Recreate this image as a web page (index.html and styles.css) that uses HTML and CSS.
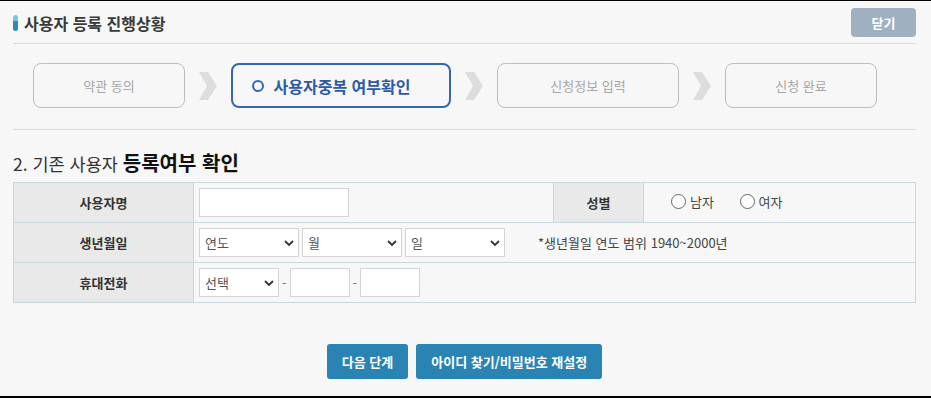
FILE: index.html
```html
<!DOCTYPE html>
<html lang="ko">
<head>
    <meta charset="UTF-8">
    <meta name="viewport" content="width=device-width, initial-scale=1.0">
    <title>사용자 등록 진행상황</title>
    <link rel="stylesheet" href="styles.css">
</head>
<body>
    <div class="container">
        <div class="top-bar">
            <h1 class="page-title"><span class="title-mark"></span>사용자 등록 진행상황</h1>
            <button class="btn-close" type="button">닫기</button>
        </div>

        <div class="steps">
            <div class="step step-1">약관 동의</div>
            <svg class="step-arrow" width="18" height="28" viewBox="0 0 18 28"><polygon points="0,0 9,0 18,14 9,28 0,28 8,14" fill="#dddddd"/></svg>
            <div class="step step-2 active"><span class="step-dot"></span>사용자중복 여부확인</div>
            <svg class="step-arrow" width="18" height="28" viewBox="0 0 18 28"><polygon points="0,0 9,0 18,14 9,28 0,28 8,14" fill="#dddddd"/></svg>
            <div class="step step-3">신청정보 입력</div>
            <svg class="step-arrow" width="18" height="28" viewBox="0 0 18 28"><polygon points="0,0 9,0 18,14 9,28 0,28 8,14" fill="#dddddd"/></svg>
            <div class="step step-4">신청 완료</div>
        </div>

        <h2 class="section-title">2. 기존 사용자 <strong>등록여부 확인</strong></h2>

        <form id="checkForm">
            <table class="form-table">
                <tr>
                    <th class="col-label">사용자명</th>
                    <td class="col-name"><input type="text" class="inp inp-name"></td>
                    <th class="col-label2">성별</th>
                    <td>
                        <label class="radio"><input type="radio" name="gender" value="m"><span class="radio-mark"></span>남자</label>
                        <label class="radio"><input type="radio" name="gender" value="f"><span class="radio-mark"></span>여자</label>
                    </td>
                </tr>
                <tr>
                    <th>생년월일</th>
                    <td colspan="3">
                        <div class="field-row">
                            <select class="sel sel-date"><option>연도</option></select>
                            <select class="sel sel-date"><option>월</option></select>
                            <select class="sel sel-date"><option>일</option></select>
                            <span class="hint">*생년월일 연도 범위 1940~2000년</span>
                        </div>
                    </td>
                </tr>
                <tr>
                    <th>휴대전화</th>
                    <td colspan="3">
                        <div class="field-row">
                            <select class="sel sel-phone"><option>선택</option></select>
                            <span class="dash">-</span>
                            <input type="text" class="inp inp-phone">
                            <span class="dash">-</span>
                            <input type="text" class="inp inp-phone">
                        </div>
                    </td>
                </tr>
            </table>

            <div class="actions">
                <button type="submit" class="btn-main">다음 단계</button>
                <button type="button" class="btn-main">아이디 찾기/비밀번호 재설정</button>
            </div>
        </form>
    </div>
</body>
</html>
```

FILE: styles.css
```css
html, body {
    height: 100%;
}

body {
    margin: 0;
    font-family: "Noto Sans CJK KR", "Noto Sans", sans-serif;
    background-color: #f7f7f7;
    color: #333;
    box-sizing: border-box;
    border-top: 1px solid #000;
    border-bottom: 2px solid #000;
}

.container {
    padding: 0 15px 0 13px;
}

.top-bar {
    display: flex;
    justify-content: space-between;
    align-items: center;
    padding: 7px 0 6px;
    border-bottom: 1px solid #dcdcdc;
}

.page-title {
    display: flex;
    align-items: center;
    margin: 0;
    font-size: 16px;
    font-weight: 700;
    color: #3a3a3a;
}

.title-mark {
    display: inline-block;
    width: 5px;
    height: 16px;
    margin-right: 6px;
    border-radius: 3px;
    background: linear-gradient(#7fc3d6 0%, #7fc3d6 35%, #2b8bb0 36%, #2b8bb0 100%);
}

.btn-close {
    width: 65px;
    height: 29px;
    border: none;
    border-radius: 4px;
    background-color: #9fb1c0;
    color: #fff;
    font-family: inherit;
    font-size: 13px;
    font-weight: 700;
}

.steps {
    display: flex;
    align-items: center;
    gap: 14px;
    padding: 19px 0 21px 20px;
    border-bottom: 1px solid #dcdcdc;
}

.step {
    box-sizing: border-box;
    display: flex;
    align-items: center;
    justify-content: center;
    height: 45px;
    border: 1px solid #bdbdbd;
    border-radius: 8px;
    background: #f7f7f7;
    color: #a6a6a6;
    font-size: 13px;
}

.step-1 { width: 152px; }
.step-2 { width: 220px; }
.step-3 { width: 182px; }
.step-4 { width: 152px; }

.step.active {
    padding-right: 20px;
    border: 2px solid #3566b6;
    color: #2d5aa6;
    font-size: 16px;
    font-weight: 700;
}

.step-dot {
    box-sizing: border-box;
    width: 12px;
    height: 12px;
    margin-right: 10px;
    border: 2px solid #3566b6;
    border-radius: 50%;
}

.section-title {
    margin: 18px 0 5px;
    font-size: 17.5px;
    font-weight: 400;
    color: #333;
}

.section-title strong {
    font-size: 20px;
    color: #111;
}

.form-table {
    width: 100%;
    border-collapse: collapse;
    border: 1px solid #ccd6dd;
    font-size: 13px;
}

.form-table th,
.form-table td {
    height: 39px;
    padding: 0 5px;
    border-top: 1px solid #ccd6dd;
    border-bottom: 1px solid #ccd6dd;
}

.form-table th {
    background-color: #e9e9e9;
    color: #333;
    font-weight: 700;
    border-right: 1px solid #ccd6dd;
}

.form-table .col-label {
    width: 169px;
}

.form-table .col-name {
    width: 349px;
}

.form-table .col-label2 {
    width: 79px;
    border-left: 1px solid #ccd6dd;
}

.inp,
.sel {
    box-sizing: border-box;
    height: 29px;
    margin: 0;
    border: 1px solid #d4d4d4;
    background-color: #fff;
    font-family: inherit;
    font-size: 13px;
    color: #555;
}

.inp-name {
    width: 150px;
}

.inp-phone {
    width: 60px;
}

.sel {
    appearance: none;
    padding: 0 20px 0 5px;
    background-image: url("data:image/svg+xml;utf8,<svg xmlns='http://www.w3.org/2000/svg' width='10' height='6' viewBox='0 0 10 6'><polyline points='1,1 5,5 9,1' fill='none' stroke='%23333' stroke-width='1.8'/></svg>");
    background-repeat: no-repeat;
    background-position: right 4px center;
}

.sel-date {
    width: 100px;
}

.sel-phone {
    width: 80px;
}

.field-row {
    display: flex;
    align-items: center;
    gap: 3px;
}

.hint {
    margin-left: 30px;
    color: #444;
}

.dash {
    color: #777;
}

.radio {
    display: inline-flex;
    align-items: center;
    margin-left: 22px;
    margin-right: 0;
    color: #444;
}

.radio input {
    display: none;
}

.radio-mark {
    box-sizing: border-box;
    width: 15px;
    height: 15px;
    margin-right: 4px;
    border: 1px solid #666;
    border-radius: 50%;
    background: #fff;
}

.actions {
    display: flex;
    justify-content: center;
    gap: 8px;
    margin-top: 41px;
}

.btn-main {
    height: 35px;
    padding: 0 15px;
    border: none;
    border-radius: 3px;
    background-color: #2a84b3;
    color: #fff;
    font-family: inherit;
    font-size: 13px;
    font-weight: 700;
}
```
